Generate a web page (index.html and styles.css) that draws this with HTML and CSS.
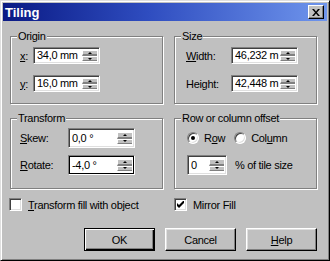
FILE: index.html
```html
<!DOCTYPE html>
<html lang="en">
<head>
    <meta charset="UTF-8">
    <title>Tiling</title>
    <link rel="stylesheet" href="styles.css">
</head>
<body>
    <div class="window">
        <div class="titlebar">
            <span class="title">Tiling</span>
            <span class="close">
                <svg width="8" height="7" viewBox="0 0 8 7"><path d="M0 0h2l2 2.5L6 0h2L5 3.5L8 7H6L4 4.5L2 7H0l3-3.5z" fill="#000"/></svg>
            </span>
        </div>
        <div class="client">
            <div class="groups">
                <fieldset class="group origin">
                    <legend>Origin</legend>
                    <div class="row">
                        <label class="lbl"><u>x</u>:</label>
                        <div class="spin"><span class="val">34,0 mm</span><span class="arrows"><i class="up"></i><i class="down"></i></span></div>
                    </div>
                    <div class="row">
                        <label class="lbl"><u>y</u>:</label>
                        <div class="spin"><span class="val">16,0 mm</span><span class="arrows"><i class="up"></i><i class="down"></i></span></div>
                    </div>
                </fieldset>
                <fieldset class="group size">
                    <legend>Size</legend>
                    <div class="row">
                        <label class="lbl"><u>W</u>idth:</label>
                        <div class="spin"><span class="val">46,232 m</span><span class="arrows"><i class="up"></i><i class="down"></i></span></div>
                    </div>
                    <div class="row">
                        <label class="lbl">Hei<u>g</u>ht:</label>
                        <div class="spin"><span class="val">42,448 m</span><span class="arrows"><i class="up"></i><i class="down"></i></span></div>
                    </div>
                </fieldset>
                <fieldset class="group transform">
                    <legend>Transform</legend>
                    <div class="row">
                        <label class="lbl"><u>S</u>kew:</label>
                        <div class="spin"><span class="val">0,0 °</span><span class="arrows"><i class="up"></i><i class="down"></i></span></div>
                    </div>
                    <div class="row">
                        <label class="lbl"><u>R</u>otate:</label>
                        <div class="spin focus"><span class="val">-4,0 °</span><span class="arrows"><i class="up"></i><i class="down"></i></span></div>
                    </div>
                </fieldset>
                <fieldset class="group offset">
                    <legend>Row or column offset</legend>
                    <div class="radios">
                        <span class="radio on"><i class="dot"></i></span><span class="rtext">R<u>o</u>w</span>
                        <span class="radio"></span><span class="rtext">Col<u>u</u>mn</span>
                    </div>
                    <div class="row">
                        <div class="spin small"><span class="val">0</span><span class="arrows"><i class="up"></i><i class="down"></i></span></div>
                        <span class="pct">% of tile size</span>
                    </div>
                </fieldset>
            </div>
            <div class="checks">
                <div class="check"><span class="box"></span><span><u>T</u>ransform fill with object</span></div>
                <div class="check"><span class="box">
                    <svg width="7" height="7" viewBox="0 0 7 7"><path d="M0 2v3l2 2l5-5V-1L2 4z" fill="#000"/></svg>
                </span><span>Mirror Fill</span></div>
            </div>
            <div class="buttons">
                <span class="btn default"><span>OK</span></span>
                <span class="btn"><span>Cancel</span></span>
                <span class="btn"><span><u>H</u>elp</span></span>
            </div>
        </div>
    </div>
</body>
</html>
```

FILE: styles.css
```css
* {
    box-sizing: border-box;
}
body {
    margin: 0;
    background-color: #c0c0c0;
    font-family: "Liberation Sans", Arial, sans-serif;
    font-size: 11px;
    letter-spacing: -0.3px;
    color: #000;
}
.window {
    width: 330px;
    height: 261px;
    background-color: #c0c0c0;
    border: 1px solid;
    border-color: #dfdfdf #000 #000 #dfdfdf;
    box-shadow: inset 1px 1px #fff, inset -1px -1px #808080;
}
.titlebar {
    margin: 2px 2px 0;
    height: 18px;
    display: flex;
    align-items: center;
    justify-content: space-between;
    background: linear-gradient(to right, #0a1a84, #2f4dc0 45%, #6f95ec);
}
.title {
    color: #fff;
    font-weight: bold;
    padding-left: 2px;
    font-size: 13px;
    letter-spacing: 0;
}
.close {
    width: 16px;
    height: 14px;
    margin-right: 3px;
    display: flex;
    align-items: center;
    justify-content: center;
    background-color: #c0c0c0;
    border: 1px solid;
    border-color: #fff #000 #000 #fff;
    box-shadow: inset -1px -1px #808080;
}
.client {
    padding: 9px 12px 0 9px;
}
.groups {
    display: grid;
    grid-template-columns: 153px 143px;
    grid-template-rows: 74px 77px;
    column-gap: 11px;
    row-gap: 8px;
}
.group {
    margin: 0;
    border: 1px solid #808080;
    box-shadow: inset 1px 1px #fff, 1px 1px #fff;
    padding: 4px 0 0 9px;
    display: flex;
    flex-direction: column;
    gap: 11px;
}
.group legend {
    padding: 0 1px;
    margin-left: -3px;
    background-color: #c0c0c0;
    line-height: 13px;
}
.size {
    padding-left: 11px;
}
.size legend {
    margin-left: -5px;
}
.transform {
    padding-top: 3px;
    gap: 7px;
}
.offset {
    padding-top: 6px;
    padding-left: 12px;
    gap: 10px;
}
.offset legend {
    margin-left: -6px;
}
.row {
    display: flex;
    align-items: center;
}
.lbl {
    width: 13px;
}
.size .lbl {
    width: 45px;
}
.transform .lbl {
    width: 48px;
}
.spin {
    width: 67px;
    height: 17px;
    display: flex;
    align-items: stretch;
    background-color: #fff;
    border: 1px solid;
    border-color: #808080 #fff #fff #808080;
    box-shadow: inset 1px 1px #404040, inset -1px -1px #dfdfdf;
    padding: 2px 2px 2px 3px;
}
.transform .spin {
    height: 20px;
}
.spin.focus {
    border-color: #808080 #fff #fff #808080;
    box-shadow: inset 1px 1px #000, inset -1px -1px #000;
}
.spin.small {
    width: 40px;
    height: 20px;
    margin-right: 8px;
}
.val {
    flex: 1;
    line-height: 13px;
    white-space: nowrap;
    overflow: hidden;
    align-self: center;
}
.arrows {
    width: 15px;
    display: flex;
    flex-direction: column;
}
.transform .arrows, .small .arrows {
    padding: 1px 0;
}
.arrows i {
    flex: 1;
    display: flex;
    align-items: center;
    justify-content: center;
    background-color: #c0c0c0;
    border-top: 1px solid #fff;
    border-left: 1px solid #fff;
    border-bottom: 1px solid #808080;
}
.arrows i.up {
    border-bottom: 2px solid #808080;
}
.arrows i::after {
    content: "";
    border-left: 2px solid transparent;
    border-right: 2px solid transparent;
}
.arrows i.up::after {
    border-bottom: 2px solid #000;
}
.arrows i.down::after {
    border-top: 2px solid #000;
}
.radios {
    display: flex;
    align-items: center;
    height: 14px;
}
.radio {
    width: 12px;
    height: 12px;
    border-radius: 50%;
    background-color: #fff;
    border: 1px solid;
    border-color: #808080 #fff #fff #808080;
    box-shadow: inset 1px 1px #404040, inset -1px -1px #dfdfdf;
    display: flex;
    align-items: center;
    justify-content: center;
}
.radio .dot {
    width: 4px;
    height: 4px;
    border-radius: 50%;
    background-color: #000;
}
.rtext {
    margin: 0 9px 0 5px;
}
.checks {
    margin-top: 9px;
    display: grid;
    grid-template-columns: 153px 143px;
    column-gap: 11px;
}
.check {
    display: flex;
    align-items: center;
    gap: 6px;
}
.check:first-child {
    margin-left: -1px;
}
.box {
    width: 13px;
    height: 13px;
    background-color: #fff;
    border: 1px solid;
    border-color: #808080 #fff #fff #808080;
    box-shadow: inset 1px 1px #404040, inset -1px -1px #dfdfdf;
    display: flex;
    align-items: center;
    justify-content: center;
}
.buttons {
    margin-top: 17px;
    display: flex;
    justify-content: flex-end;
    gap: 10px;
}
.btn {
    width: 71px;
    height: 23px;
    display: flex;
    align-items: center;
    justify-content: center;
    border: 1px solid;
    border-color: #fff #000 #000 #fff;
    box-shadow: inset -1px -1px #808080, inset 1px 1px #dfdfdf;
}
.btn.default {
    border: 1px solid #000;
    box-shadow: inset 1px 1px #fff, inset -1px -1px #000, inset -2px -2px #808080;
}
```
